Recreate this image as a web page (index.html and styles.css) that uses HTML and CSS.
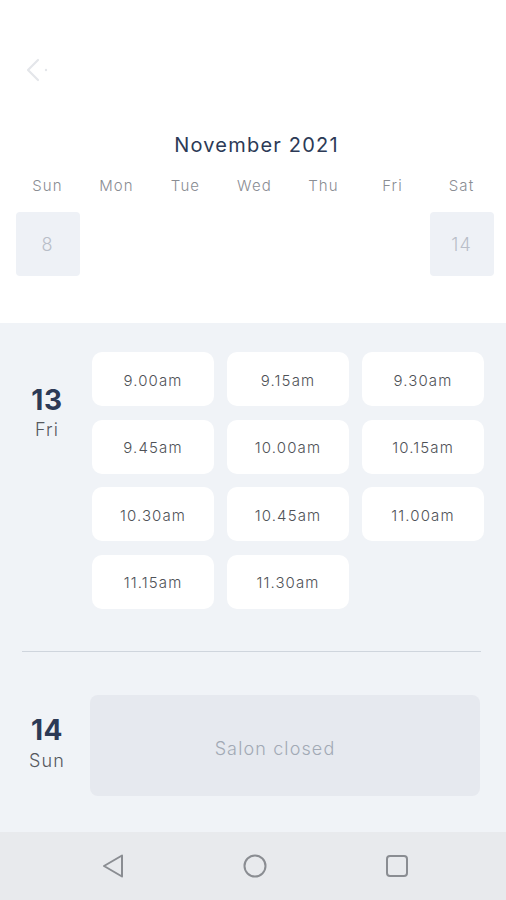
FILE: index.html
```html
<!DOCTYPE html>
<html>
  <head>
    <meta charset="UTF-8">
    <meta name="viewport" content="width=device-width, initial-scale=1.0">
    <title>Book a time</title>
    <link rel="stylesheet" href="styles.css">
  </head>

  <body>
    <div class="screen">
      <div class="top">
        <div class="back">
          <svg width="30" height="30" viewBox="0 0 30 30">
            <path d="M14 2 L4 12 L14 22" fill="none" stroke="#e4e6ea" stroke-width="2.2" stroke-linecap="round" stroke-linejoin="round"/>
            <circle cx="22" cy="12" r="1.2" fill="#e4e6ea"/>
          </svg>
        </div>

        <div class="month">November 2021</div>

        <div class="week">
          <div class="week-day">Sun</div>
          <div class="week-day">Mon</div>
          <div class="week-day">Tue</div>
          <div class="week-day">Wed</div>
          <div class="week-day">Thu</div>
          <div class="week-day">Fri</div>
          <div class="week-day">Sat</div>

          <div class="date-cell"><span class="date">8</span></div>
          <div class="date-cell"></div>
          <div class="date-cell"></div>
          <div class="date-cell"></div>
          <div class="date-cell"></div>
          <div class="date-cell"></div>
          <div class="date-cell"><span class="date">14</span></div>
        </div>
      </div>

      <div class="slots">
        <div class="day">
          <div class="day-label">
            <div class="day-num">13</div>
            <div class="day-name">Fri</div>
          </div>
          <div class="slot-grid">
            <div class="slot">9.00am</div>
            <div class="slot">9.15am</div>
            <div class="slot">9.30am</div>
            <div class="slot">9.45am</div>
            <div class="slot">10.00am</div>
            <div class="slot">10.15am</div>
            <div class="slot">10.30am</div>
            <div class="slot">10.45am</div>
            <div class="slot">11.00am</div>
            <div class="slot">11.15am</div>
            <div class="slot">11.30am</div>
          </div>
        </div>

        <div class="divider"></div>

        <div class="day day-closed">
          <div class="day-label">
            <div class="day-num">14</div>
            <div class="day-name">Sun</div>
          </div>
          <div class="closed">Salon closed</div>
        </div>
      </div>

      <div class="nav">
        <svg width="24" height="26" viewBox="0 0 24 26">
          <path d="M21 2.5 L3 13 L21 23.5 Z" fill="none" stroke="#8a8d92" stroke-width="2" stroke-linejoin="round"/>
        </svg>
        <svg width="26" height="26" viewBox="0 0 26 26">
          <circle cx="13" cy="13" r="10.5" fill="none" stroke="#8a8d92" stroke-width="2"/>
        </svg>
        <svg width="24" height="24" viewBox="0 0 24 24">
          <rect x="2" y="2" width="20" height="20" rx="3" fill="none" stroke="#8a8d92" stroke-width="2"/>
        </svg>
      </div>
    </div>
  </body>
</html>
```

FILE: styles.css
```css
* {
  box-sizing: border-box;
}

body {
  margin: 0;
  font-family: Inter, "DejaVu Sans", sans-serif;
  letter-spacing: 0.07em;
  background: #ffffff;
}

.screen {
  width: 506px;
  height: 900px;
  display: flex;
  flex-direction: column;
  overflow: hidden;
}

.top {
  height: 323px;
  padding: 0 10px 0 13px;
  background: #ffffff;
}

.back {
  height: 131px;
  padding: 58px 0 0 11px;
}

.month {
  text-align: center;
  font-size: 20px;
  color: #2c3a56;
  letter-spacing: 0.06em;
  height: 28px;
  line-height: 28px;
  margin-left: 4px;
}

.week {
  display: grid;
  grid-template-columns: repeat(7, 1fr);
  margin-top: 15px;
}

.week-day {
  text-align: center;
  font-size: 15px;
  color: #8a8d93;
  height: 38px;
  line-height: 24px;
  font-weight: 300;
}

.date-cell {
  display: flex;
  justify-content: center;
}

.date {
  width: 64px;
  height: 64px;
  border-radius: 4px;
  background: #eef1f6;
  color: #b9bec8;
  font-size: 18px;
  font-weight: 300;
  display: flex;
  align-items: center;
  justify-content: center;
}

.slots {
  flex: 1;
  background: #f0f3f7;
  padding: 29px 22px 0 22px;
}

.day {
  display: flex;
  gap: 20px;
}

.day-label {
  width: 50px;
  flex-shrink: 0;
  text-align: center;
  padding-top: 31px;
}

.day-num {
  font-size: 28px;
  font-weight: 700;
  color: #2c3a56;
  line-height: 34px;
  letter-spacing: 0.02em;
}

.day-name {
  font-size: 18px;
  color: #55585e;
  line-height: 26px;
  font-weight: 300;
}

.slot-grid {
  display: grid;
  grid-template-columns: repeat(3, 122px);
  grid-auto-rows: 54px;
  column-gap: 13px;
  row-gap: 13.5px;
}

.slot {
  background: #ffffff;
  border-radius: 10px;
  display: flex;
  align-items: center;
  justify-content: center;
  padding-top: 2px;
  font-size: 15px;
  font-weight: 300;
  color: #4f5257;
}

.divider {
  height: 1px;
  background: #cfd5dd;
  margin: 42px 3px 43px 0;
}

.day-closed {
  gap: 18px;
}

.day-closed .day-label {
  padding-top: 18px;
}

.day-closed .day-name {
  line-height: 28px;
}

.closed {
  flex: 1;
  height: 101px;
  margin-right: 4px;
  padding: 6px 20px 0 0;
  border-radius: 8px;
  background: #e6e9ef;
  display: flex;
  align-items: center;
  justify-content: center;
  font-size: 18px;
  font-weight: 300;
  color: #a2a9b5;
}

.nav {
  height: 68px;
  background: #e8eaed;
  display: flex;
  align-items: center;
  justify-content: space-between;
  padding: 0 97px 0 101px;
}
```
